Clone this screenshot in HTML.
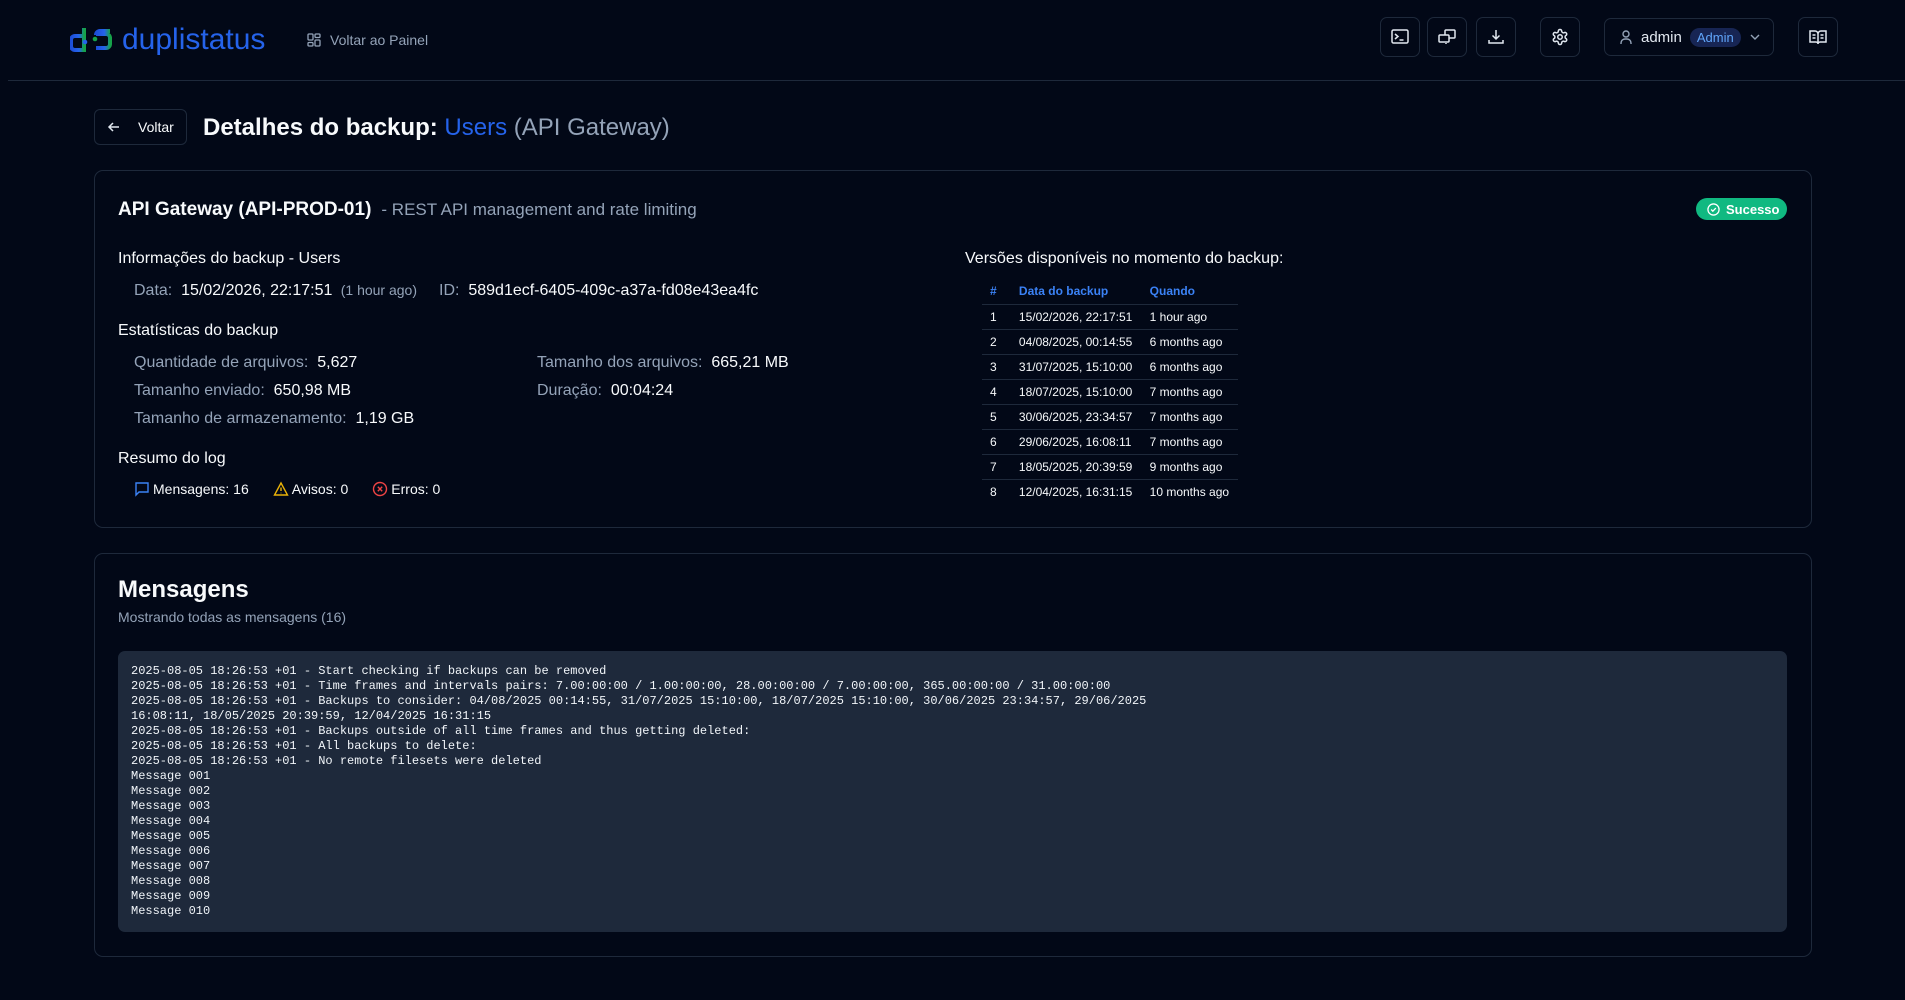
<!DOCTYPE html>
<html><head><meta charset="utf-8"><style>
*{box-sizing:border-box;margin:0;padding:0}
body{width:1905px;height:1000px;background:#020817;font-family:"Liberation Sans",sans-serif;color:#f8fafc;position:relative;overflow:hidden}
.a{position:absolute;white-space:nowrap}
.c{line-height:1}
.btn{position:absolute;top:17px;width:40px;height:40px;border:1px solid #1e293b;border-radius:7px;display:flex;align-items:center;justify-content:center}
.card{position:absolute;left:94px;width:1718px;border:1px solid #1e293b;border-radius:9px}
.m{color:#94a3b8}
table{border-collapse:collapse;font-size:12px}
td,th{height:25px;text-align:left;padding:0 8px;border-bottom:1px solid #1e293b}
td:nth-child(2),th:nth-child(2){padding-left:14px}
th{color:#3b82f6;font-weight:bold;height:26px}
tr:last-child td{border-bottom:none}
pre{font-family:"Liberation Mono",monospace;font-size:12px;line-height:15px;color:#f1f5f9}
</style></head><body>
<svg class="a" style="left:70px;top:25px" width="42" height="30" viewBox="0 0 42 30">
<defs><linearGradient id="g" x1="0" x2="1"><stop offset="0" stop-color="#1d4ed8"/><stop offset="0.6" stop-color="#2563eb"/><stop offset="1" stop-color="#16a34a"/></linearGradient></defs>
<path d="M14 3v22H5a4 4 0 0 1-4-4v-6a4 4 0 0 1 4-4h7" fill="none" stroke="url(#g)" stroke-width="4"/>
<circle cx="15" cy="17" r="2.3" fill="#2563eb"/><circle cx="25" cy="14" r="2.3" fill="#16a34a"/>
<path d="M40 6H30a4 4 0 0 0-4 4M26 9h10a4 4 0 0 1 4 4v6a4 4 0 0 1-4 4H26" fill="none" stroke="url(#g)" stroke-width="4"/>
</svg>
<div class="a c" style="left:122px;top:25px;font-size:30px;color:#2563eb">duplistatus</div>
<svg class="a" style="left:307px;top:33px" width="14" height="14" viewBox="0 0 14 14" fill="none" stroke="#94a3b8" stroke-width="1.3"><rect x="1" y="1" width="5" height="6" rx="1"/><rect x="8" y="1" width="5" height="3.5" rx="1"/><rect x="8" y="7" width="5" height="6" rx="1"/><rect x="1" y="9.5" width="5" height="3.5" rx="1"/></svg>
<div class="a c m" style="left:330px;top:33px;font-size:14px">Voltar ao Painel</div>

<div class="btn" style="left:1380px"><svg width="18" height="16" viewBox="0 0 18 16" fill="none" stroke="#e2e8f0" stroke-width="1.5"><rect x="1" y="1" width="16" height="13" rx="1.5"/><path d="M4 5l3 2.5L4 10M8.5 11h4"/></svg></div>
<div class="btn" style="left:1427px"><svg width="18" height="16" viewBox="0 0 18 16" fill="none" stroke="#e2e8f0" stroke-width="1.5"><rect x="7" y="1" width="10" height="8" rx="1"/><rect x="1" y="6" width="10" height="7" rx="1" fill="#020817"/><path d="M8 14v1"/></svg></div>
<div class="btn" style="left:1476px"><svg width="18" height="18" viewBox="0 0 18 18" fill="none" stroke="#e2e8f0" stroke-width="1.5"><path d="M9 2v9M5.5 7.5L9 11l3.5-3.5M2 12v3h14v-3"/></svg></div>
<div class="btn" style="left:1540px"><svg width="18" height="18" viewBox="0 0 24 24" fill="none" stroke="#e2e8f0" stroke-width="2"><circle cx="12" cy="12" r="3"/><path d="M12.2 2h-.4a2 2 0 0 0-2 2v.2a2 2 0 0 1-1 1.7l-.4.3a2 2 0 0 1-2 0l-.2-.1a2 2 0 0 0-2.7.7l-.2.4a2 2 0 0 0 .7 2.7l.2.1a2 2 0 0 1 1 1.7v.5a2 2 0 0 1-1 1.8l-.2.1a2 2 0 0 0-.7 2.7l.2.4a2 2 0 0 0 2.7.7l.2-.1a2 2 0 0 1 2 0l.4.3a2 2 0 0 1 1 1.7v.2a2 2 0 0 0 2 2h.4a2 2 0 0 0 2-2v-.2a2 2 0 0 1 1-1.7l.4-.3a2 2 0 0 1 2 0l.2.1a2 2 0 0 0 2.7-.7l.2-.4a2 2 0 0 0-.7-2.7l-.2-.1a2 2 0 0 1-1-1.8v-.5a2 2 0 0 1 1-1.7l.2-.1a2 2 0 0 0 .7-2.7l-.2-.4a2 2 0 0 0-2.7-.7l-.2.1a2 2 0 0 1-2 0l-.4-.3a2 2 0 0 1-1-1.7V4a2 2 0 0 0-2-2z"/></svg></div>
<div class="btn" style="left:1604px;width:170px;top:18px;height:38px;justify-content:flex-start;padding-left:14px">
<svg width="14" height="16" viewBox="0 0 14 16" fill="none" stroke="#94a3b8" stroke-width="1.4"><circle cx="7" cy="5" r="3"/><path d="M2 15v-1a4 4 0 0 1 4-4h2a4 4 0 0 1 4 4v1"/></svg>
<span style="font-size:15px;margin-left:8px;color:#e2e8f0">admin</span>
<span style="font-size:13px;margin-left:8px;background:#172554;color:#60a5fa;border-radius:10px;padding:2px 7px">Admin</span>
<svg style="margin-left:8px" width="12" height="8" viewBox="0 0 12 8" fill="none" stroke="#94a3b8" stroke-width="1.4"><path d="M2 2l4 4 4-4"/></svg></div>
<div class="btn" style="left:1798px"><svg width="18" height="16" viewBox="0 0 18 16" fill="none" stroke="#e2e8f0" stroke-width="1.5"><path d="M1 2h5a3 3 0 0 1 3 3v10a2 2 0 0 0-2-2H1zM17 2h-5a3 3 0 0 0-3 3v10a2 2 0 0 1 2-2h6z"/><path d="M3.5 6h3M3.5 9h3M11.5 6h3M11.5 9h3"/></svg></div>
<div class="a" style="left:8px;top:80px;width:1897px;height:1px;background:#1e293b"></div>

<div class="a" style="left:94px;top:109px;width:93px;height:36px;border:1px solid #1e293b;border-radius:6px"></div>
<svg class="a" style="left:107px;top:120px" width="14" height="14" viewBox="0 0 14 14" fill="none" stroke="#e2e8f0" stroke-width="1.5"><path d="M12 7H2M6 3L2 7l4 4"/></svg>
<div class="a c" style="left:138px;top:120px;font-size:14px">Voltar</div>
<div class="a c" style="left:203px;top:116px;font-size:24px"><b>Detalhes do backup:</b> <span style="color:#2563eb">Users</span> <span class="m">(API Gateway)</span></div>

<div class="card" style="top:170px;height:358px"></div>
<div class="a c" style="left:118px;top:200px;font-size:19px"><b>API Gateway (API-PROD-01)</b> <span class="m" style="font-size:17px">&nbsp;- REST API management and rate limiting</span></div>
<div class="a" style="left:1696px;top:198px;width:91px;height:22px;background:#10b981;border-radius:11px;display:flex;align-items:center;padding-left:11px;font-size:13px;font-weight:bold;color:#fff">
<svg width="13" height="13" viewBox="0 0 14 14" fill="none" stroke="#fff" stroke-width="1.4"><circle cx="7" cy="7" r="6"/><path d="M4.5 7l1.8 1.8L9.5 5.5"/></svg><span style="margin-left:6px">Sucesso</span></div>

<div class="a c" style="left:118px;top:251px;font-size:16px">Informações do backup - Users</div>
<div class="a c" style="left:134px;top:283px;font-size:16px"><span class="m">Data:</span>&nbsp; 15/02/2026, 22:17:51 <span class="m" style="font-size:14px">&nbsp;(1 hour ago)</span></div>
<div class="a c" style="left:439px;top:283px;font-size:16px"><span class="m">ID:</span>&nbsp; 589d1ecf-6405-409c-a37a-fd08e43ea4fc</div>
<div class="a c" style="left:118px;top:323px;font-size:16px">Estatísticas do backup</div>
<div class="a c" style="left:134px;top:355px;font-size:16px"><span class="m">Quantidade de arquivos:</span>&nbsp; 5,627</div>
<div class="a c" style="left:134px;top:383px;font-size:16px"><span class="m">Tamanho enviado:</span>&nbsp; 650,98 MB</div>
<div class="a c" style="left:134px;top:411px;font-size:16px"><span class="m">Tamanho de armazenamento:</span>&nbsp; 1,19 GB</div>
<div class="a c" style="left:537px;top:355px;font-size:16px"><span class="m">Tamanho dos arquivos:</span>&nbsp; 665,21 MB</div>
<div class="a c" style="left:537px;top:383px;font-size:16px"><span class="m">Duração:</span>&nbsp; 00:04:24</div>
<div class="a c" style="left:118px;top:451px;font-size:16px">Resumo do log</div>
<div class="a c" style="left:134px;top:481px;font-size:14px;display:flex;align-items:center">
<svg width="16" height="16" viewBox="0 0 16 16" fill="none" stroke="#3b82f6" stroke-width="1.4"><path d="M2 2h12v9H5l-3 3z"/></svg><span style="margin-left:3px">Mensagens: 16</span>
<svg style="margin-left:24px" width="16" height="16" viewBox="0 0 16 16" fill="none" stroke="#eab308" stroke-width="1.4"><path d="M8 2L1.5 14h13z"/><path d="M8 6.5v3.5M8 11.8v.4"/></svg><span style="margin-left:3px">Avisos: 0</span>
<svg style="margin-left:24px" width="16" height="16" viewBox="0 0 16 16" fill="none" stroke="#ef4444" stroke-width="1.4"><circle cx="8" cy="8" r="6.5"/><path d="M5.8 5.8l4.4 4.4M10.2 5.8l-4.4 4.4"/></svg><span style="margin-left:3px">Erros: 0</span></div>

<div class="a c" style="left:965px;top:251px;font-size:16px">Versões disponíveis no momento do backup:</div>
<table class="a" style="left:982px;top:278px;width:256px">
<tr><th>#</th><th>Data do backup</th><th>Quando</th></tr>
<tr><td>1</td><td>15/02/2026, 22:17:51</td><td>1 hour ago</td></tr>
<tr><td>2</td><td>04/08/2025, 00:14:55</td><td>6 months ago</td></tr>
<tr><td>3</td><td>31/07/2025, 15:10:00</td><td>6 months ago</td></tr>
<tr><td>4</td><td>18/07/2025, 15:10:00</td><td>7 months ago</td></tr>
<tr><td>5</td><td>30/06/2025, 23:34:57</td><td>7 months ago</td></tr>
<tr><td>6</td><td>29/06/2025, 16:08:11</td><td>7 months ago</td></tr>
<tr><td>7</td><td>18/05/2025, 20:39:59</td><td>9 months ago</td></tr>
<tr><td>8</td><td>12/04/2025, 16:31:15</td><td>10 months ago</td></tr>
</table>

<div class="card" style="top:553px;height:404px"></div>
<div class="a c" style="left:118px;top:578px;font-size:24px;font-weight:bold">Mensagens</div>
<div class="a c m" style="left:118px;top:610px;font-size:14px">Mostrando todas as mensagens (16)</div>
<div class="a" style="left:118px;top:651px;width:1669px;height:281px;background:#1e293b;border-radius:7px;padding:13px 13px">
<pre>2025-08-05 18:26:53 +01 - Start checking if backups can be removed
2025-08-05 18:26:53 +01 - Time frames and intervals pairs: 7.00:00:00 / 1.00:00:00, 28.00:00:00 / 7.00:00:00, 365.00:00:00 / 31.00:00:00
2025-08-05 18:26:53 +01 - Backups to consider: 04/08/2025 00:14:55, 31/07/2025 15:10:00, 18/07/2025 15:10:00, 30/06/2025 23:34:57, 29/06/2025
16:08:11, 18/05/2025 20:39:59, 12/04/2025 16:31:15
2025-08-05 18:26:53 +01 - Backups outside of all time frames and thus getting deleted:
2025-08-05 18:26:53 +01 - All backups to delete:
2025-08-05 18:26:53 +01 - No remote filesets were deleted
Message 001
Message 002
Message 003
Message 004
Message 005
Message 006
Message 007
Message 008
Message 009
Message 010</pre></div>
</body></html>
